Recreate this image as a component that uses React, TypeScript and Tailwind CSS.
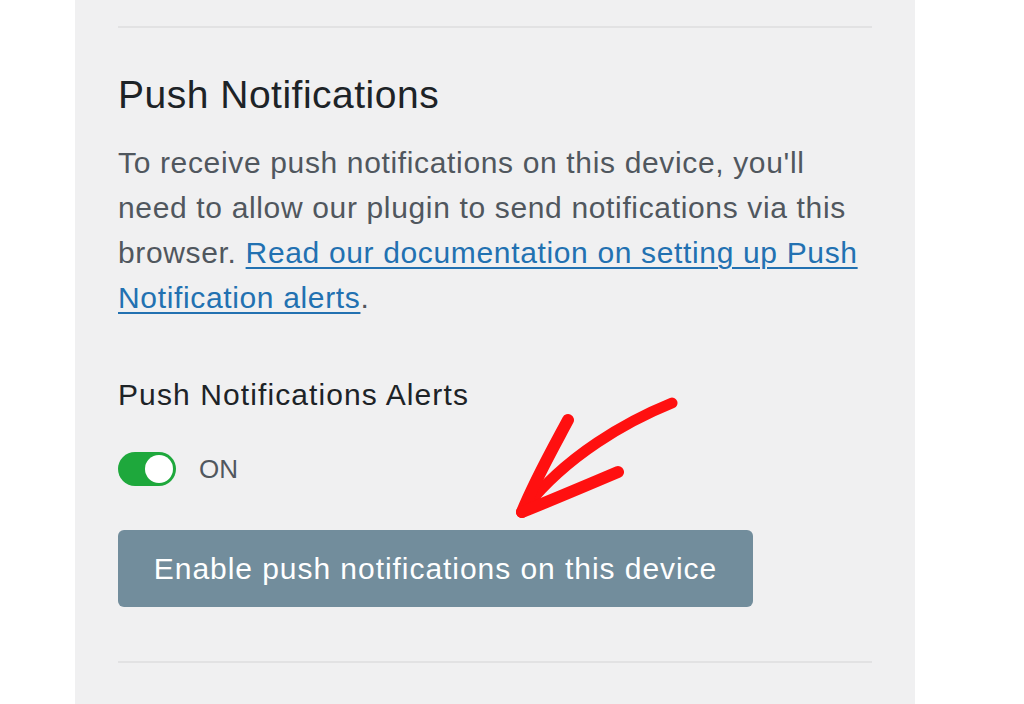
export default function App() {
  return (
    <div className="relative w-[1024px] h-[704px] bg-white overflow-hidden font-['Liberation_Sans',sans-serif]">
      <div className="ml-[75px] w-[840px] h-full bg-[#f0f0f1] px-[43px] pt-[26px]">
        <div className="h-[2px] bg-[#e2e2e3]" />

        <h2 className="mt-[45px] text-[39px] leading-[44px] text-[#1d2327] tracking-[0.5px]">Push Notifications</h2>

        <p className="mt-[23px] text-[30px] leading-[45px] text-[#50575e] tracking-[0.65px]">
          To receive push notifications on this device, you'll
          <br />
          need to allow our plugin to send notifications via this
          <br />
          browser.{' '}
          <a href="#" className="text-[#2271b1] underline underline-offset-[4px] decoration-[2px]">
            Read our documentation on setting up Push
            <br />
            Notification alerts
          </a>
          .
        </p>

        <div className="mt-[58px] text-[30px] leading-[34px] text-[#1d2327] tracking-[1.1px]">Push Notifications Alerts</div>

        <div className="mt-[40px] h-[34px] flex items-center gap-[23px]">
          <div className="w-[58px] h-[34px] rounded-full bg-[#1ea83c] flex items-center justify-end pr-[3px]">
            <div className="w-[28px] h-[28px] rounded-full bg-white" />
          </div>
          <span className="text-[26px] leading-[34px] text-[#50575e]">ON</span>
        </div>

        <button className="mt-[44px] w-[635px] h-[77px] rounded-[6px] bg-[#728d9c] text-white text-[30px] tracking-[0.95px]">
          Enable push notifications on this device
        </button>

        <div className="mt-[54px] h-[2px] bg-[#e2e2e3]" />
      </div>

      <svg className="absolute left-0 top-0 pointer-events-none" width="1024" height="704" viewBox="0 0 1024 704" fill="none">
        <path d="M672 403 C 630 420, 565 455, 522 512" stroke="#ff1010" strokeWidth="11" strokeLinecap="round" />
        <path d="M568 420 C 552 450, 535 480, 522 512" stroke="#ff1010" strokeWidth="12" strokeLinecap="round" />
        <path d="M618 472 C 585 486, 552 500, 522 512" stroke="#ff1010" strokeWidth="12" strokeLinecap="round" />
      </svg>
    </div>
  );
}
